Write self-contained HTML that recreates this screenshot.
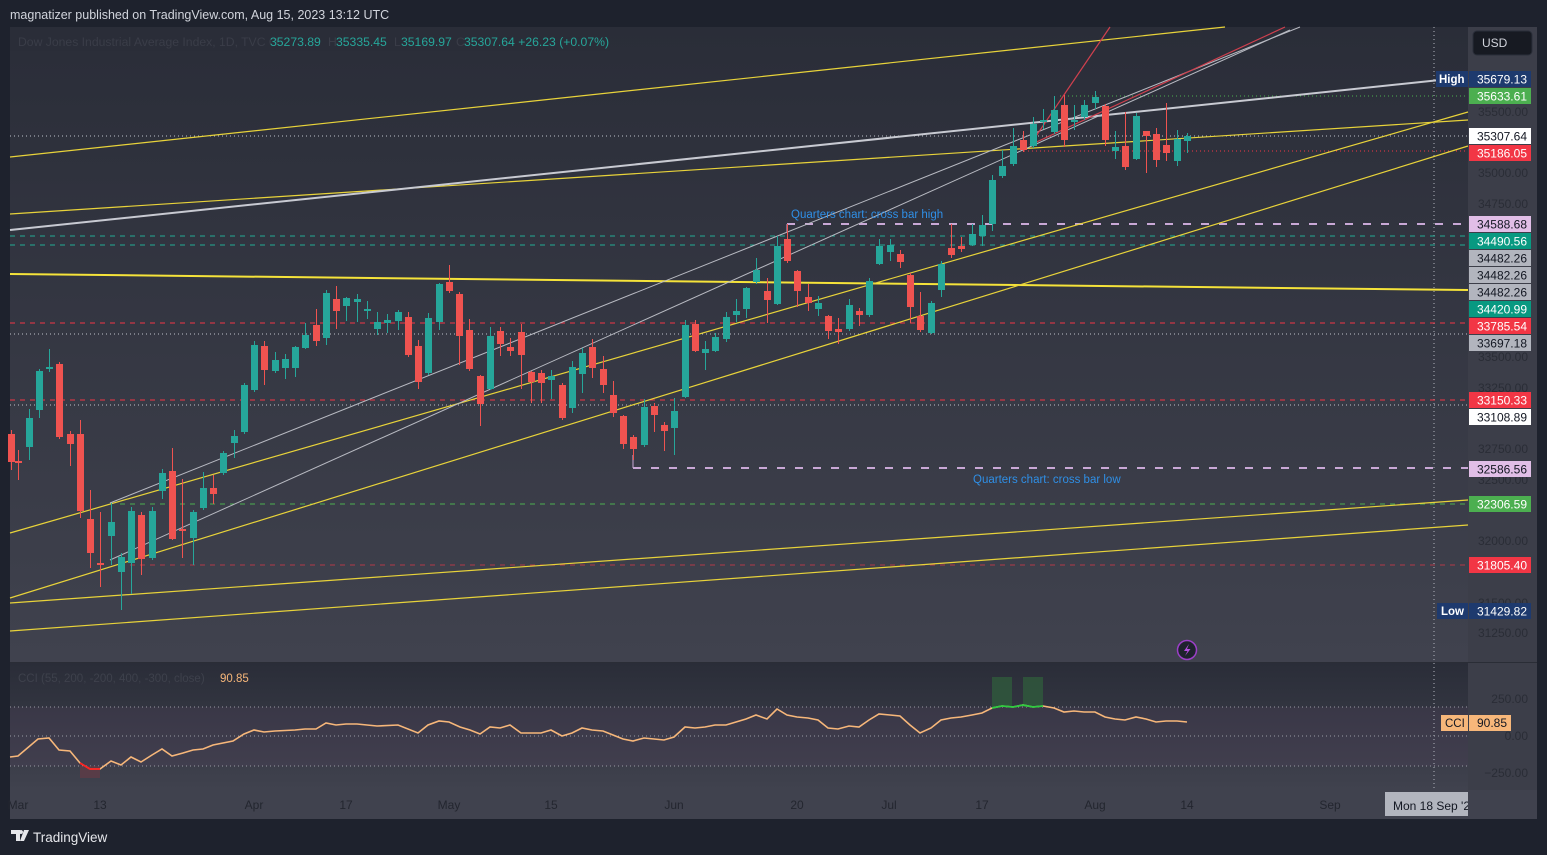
<!DOCTYPE html>
<html><head><meta charset="utf-8"><style>
html,body{margin:0;padding:0;background:#1e222d;width:1547px;height:855px;overflow:hidden;font-family:"Liberation Sans",sans-serif}
svg{display:block}
</style></head><body>
<svg id="s" width="1547" height="855" xmlns="http://www.w3.org/2000/svg" font-family="Liberation Sans, sans-serif">
<defs>
<linearGradient id="gm" x1="0" y1="0" x2="0" y2="1"><stop offset="0" stop-color="#2a2d38"/><stop offset="1" stop-color="#40424e"/></linearGradient>
<linearGradient id="gc" x1="0" y1="0" x2="0" y2="1"><stop offset="0" stop-color="#2a2d38"/><stop offset="1" stop-color="#40424e"/></linearGradient>
<clipPath id="tc"><rect x="1385" y="790" width="83" height="28"/></clipPath>
</defs>
<rect width="1547" height="855" fill="#1e222d"/>
<text x="10" y="19" font-size="12.5" fill="#d1d4dc">magnatizer published on TradingView.com, Aug 15, 2023 13:12 UTC</text>
<rect x="10" y="27" width="1527" height="792" fill="#3a3c47"/>
<rect x="10" y="27" width="1458" height="636" fill="url(#gm)"/>
<rect x="10" y="663" width="1458" height="127" fill="url(#gc)"/>
<rect x="10" y="707" width="1458" height="59" fill="#4a3f55" opacity="0.35"/>
<rect x="10" y="790" width="1527" height="29" fill="#40424e"/>
<rect x="1468" y="27" width="69" height="763" fill="#3c3e49"/>
<line x1="10" y1="662.5" x2="1537" y2="662.5" stroke="#2a2d36" stroke-width="1"/>
<g id="lines"></g>
<g id="cndl"></g>
<g id="cci"></g>
<g id="lbl"></g>
</svg>
<script>
var S=document.getElementById('s');
function ns(t,a,txt){var e=document.createElementNS('http://www.w3.org/2000/svg',t);for(var k in a)e.setAttribute(k,a[k]);if(txt!==undefined)e.textContent=txt;return e;}
function add(g,t,a,txt){document.getElementById(g).appendChild(ns(t,a,txt));}
var L='lines';
function ln(x1,y1,x2,y2,c,w,d){var a={x1:x1,y1:y1,x2:x2,y2:y2,stroke:c,'stroke-width':w||1};if(d)a['stroke-dasharray']=d;add(L,'line',a);}
ln(1434,27,1434,790,'#b2b5be',1,'1 3');
ln(1060,96,1468,96,'#4caf50',1,'1 3');
ln(10,136,1468,136,'#c0c3cc',1,'1 3');
ln(1020,151,1468,151,'#f23645',1,'1 3');
ln(787,224,1468,224,'#c9a8d6',2,'8 10');
ln(10,236,1468,236,'#22ab94',1,'5 5');
ln(10,245,1468,245,'#22ab94',1,'5 5');
ln(10,323,1468,323,'#f23645',1,'5 5');
ln(10,334,1468,334,'#c0c3cc',1,'1 3');
ln(10,400,1468,400,'#f23645',1,'5 5');
ln(10,405,1468,405,'#c0c3cc',1,'1 3');
ln(633,468,1468,468,'#c9a8d6',2,'8 10');
ln(633,468,633,455,'#c9a8d6',1);
ln(787,224,787,232,'#c9a8d6',1);
ln(120,504,1468,504,'#4caf50',1,'5 5');
ln(130,565,1468,565,'#b23a48',1,'5 5');
ln(10,157,1225,27,'#e8d33a',1.2);
ln(10,214,1468,120,'#e8d33a',1.2);
ln(10,230,1440,80,'#c8cad2',2);
ln(1440,80,1468,78,'#c8cad2',2);
ln(10,274,1468,290,'#f5e33a',2);
ln(10,533,1468,112,'#e8d33a',1.2);
ln(10,598,1468,146,'#e8d33a',1.2);
ln(110,503,1300,27,'#b8bac2',1);
ln(110,560,1290,30,'#b8bac2',1);
ln(1030,145,1285,27,'#d0404e',1.2);
ln(1030,145,1110,27,'#d0404e',1.2);
ln(10,603,1468,500,'#e8d33a',1.2);
ln(10,631,1468,525,'#e8d33a',1.2);
ln(10,707,1468,707,'#9a9ca5',1,'1 3');
ln(10,736,1468,736,'#9a9ca5',1,'1 3');
ln(10,766,1468,766,'#9a9ca5',1,'1 3');
add(L,'text',{x:791,y:218,'font-size':11.5,fill:'#2f8fe6'},'Quarters chart: cross bar high');
add(L,'text',{x:973,y:483,'font-size':11.5,fill:'#2f8fe6'},'Quarters chart: cross bar low');
var C=[[11,434,462,430,470],[18,461,462,450,480],[29,447,418,409,460],[39,410,371,369,418],[49,368,367,349,372],[59,364,437,362,439],[70,434,444,431,466],[80,434,511,420,518],[90,519,553,490,568],[100,563,564,512,587],[111,536,522,503,565],[121,572,557,553,610],[131,563,511,507,594],[141,515,559,512,575],[152,558,511,507,560],[162,491,473,469,499],[172,471,539,448,540],[182,529,530,479,558],[193,538,512,510,565],[203,508,488,472,510],[213,488,494,475,504],[223,473,453,451,475],[234,443,436,430,458],[244,432,385,383,434],[254,390,345,341,392],[264,346,370,341,385],[275,371,360,352,373],[285,368,359,354,379],[295,368,347,346,377],[305,348,335,323,349],[316,325,341,309,346],[326,338,293,290,345],[336,299,311,286,329],[346,306,298,297,321],[357,302,299,294,322],[367,311,309,301,319],[377,329,322,312,335],[387,323,320,314,333],[398,321,312,310,330],[408,317,355,312,357],[418,346,382,340,389],[428,373,318,313,375],[439,322,284,283,330],[449,282,291,265,293],[459,294,336,292,365],[469,330,369,319,371],[480,376,404,375,426],[490,389,336,327,390],[500,331,344,327,356],[510,347,351,338,356],[521,332,355,324,389],[531,372,382,371,403],[541,373,383,370,403],[551,380,376,370,399],[562,385,418,383,420],[572,408,367,361,413],[582,374,353,348,393],[592,347,368,339,378],[603,369,385,356,393],[613,395,413,381,417],[623,416,444,415,449],[633,437,449,435,460],[644,445,407,399,447],[654,406,415,403,432],[664,425,431,422,451],[674,428,411,398,455],[685,397,325,320,398],[695,324,351,320,352],[705,353,349,341,370],[715,351,337,333,352],[726,339,317,312,342],[736,315,311,299,322],[746,309,288,287,318],[756,282,270,258,284],[767,291,300,278,323],[777,304,246,236,305],[787,239,261,224,263],[797,271,291,270,307],[808,297,303,284,311],[818,309,303,296,316],[828,316,331,315,339],[838,329,332,318,344],[849,329,305,299,331],[859,311,315,308,326],[869,315,281,278,317],[879,264,246,239,265],[890,252,245,239,261],[900,254,262,250,268],[910,275,307,273,323],[920,316,330,292,332],[931,333,303,301,334],[941,290,264,261,297],[951,248,255,224,258],[961,246,249,237,252],[972,245,234,224,246],[982,236,225,215,246],[992,224,180,175,231],[1002,176,166,150,178],[1013,164,146,128,166],[1023,140,150,131,152],[1033,146,124,117,148],[1043,122,120,109,129],[1054,132,110,96,134],[1064,105,140,95,147],[1074,122,120,105,130],[1084,117,105,100,120],[1095,103,97,91,109],[1105,106,140,104,146],[1115,151,147,131,159],[1125,146,167,112,170],[1136,159,116,113,160],[1146,131,136,131,173],[1156,134,160,128,167],[1166,145,153,103,161],[1177,161,139,130,166],[1187,141,136,133,153]];
C.forEach(function(c){var x=c[0],o=c[1],cl=c[2],h=c[3],l=c[4];var col=cl>o?'#ef5350':'#26a69a';
add('cndl','line',{x1:x+0.5,y1:h,x2:x+0.5,y2:l,stroke:col,'stroke-width':1});
var t=Math.min(o,cl),b=Math.max(o,cl);if(b-t<2)b=t+2;
add('cndl','rect',{x:x-3,y:t,width:7,height:b-t,fill:col});});
var P=[[10,757],[18,756],[38,739],[49,738],[59,750],[70,751],[80,763],[90,769],[100,769],[111,761],[121,765],[131,757],[141,762],[152,755],[162,749],[172,756],[183,753],[193,750],[203,749],[213,745],[233,741],[244,734],[254,730],[264,732],[275,731],[295,730],[305,729],[316,729],[326,723],[336,725],[346,724],[357,724],[377,726],[398,725],[418,733],[428,725],[439,721],[449,722],[460,727],[470,730],[480,734],[490,727],[500,728],[510,725],[521,733],[531,733],[541,733],[551,730],[562,736],[572,733],[582,728],[592,730],[603,731],[613,735],[623,739],[633,741],[644,738],[654,739],[664,740],[674,737],[685,727],[695,728],[705,727],[715,725],[726,725],[736,722],[746,719],[756,715],[767,719],[777,709],[787,715],[797,717],[808,718],[818,720],[828,728],[838,729],[849,726],[859,727],[869,720],[879,714],[890,715],[900,716],[910,725],[920,733],[931,728],[941,720],[951,718],[961,717],[972,715],[982,713],[992,708],[1002,706],[1013,707],[1023,705],[1033,707],[1043,706],[1054,708],[1064,712],[1074,711],[1084,712],[1095,712],[1105,717],[1115,719],[1125,720],[1136,717],[1146,719],[1156,722],[1166,721],[1177,721],[1187,722]];
add('cci','rect',{x:80,y:766,width:20,height:12,fill:'#6b3a44',opacity:0.6});
add('cci','rect',{x:992,y:677,width:20,height:30,fill:'#2f5a3c',opacity:0.8});
add('cci','rect',{x:1023,y:677,width:20,height:30,fill:'#2f5a3c',opacity:0.8});
add('cci','polyline',{points:P.map(function(p){return p.join(',')}).join(' '),fill:'none',stroke:'#f7b77a','stroke-width':1.6});
add('cci','polyline',{points:'80,763 90,769 100,769',fill:'none',stroke:'#ff2020','stroke-width':1.8});
add('cci','polyline',{points:'992,708 1002,706 1013,707 1023,705 1033,707 1043,706',fill:'none',stroke:'#2ecc40','stroke-width':1.8});
var G='lbl';
function tx(x,y,s,c,sz,anc,w){var a={x:x,y:y,'font-size':sz||11,fill:c};if(anc)a['text-anchor']=anc;if(w)a['font-weight']=w;add(G,'text',a,s);}
add(G,'rect',{x:10,y:31,width:600,height:20,fill:'#2a2d38'});
tx(18,46,'Dow Jones Industrial Average Index, 1D, TVC  O','#3a3d48',12.2);
tx(270,46,'35273.89','#26a69a',12.2);tx(328,46,'H','#3a3d48',12.2);tx(336,46,'35335.45','#26a69a',12.2);
tx(394,46,'L','#3a3d48',12.2);tx(401,46,'35169.97','#26a69a',12.2);tx(456,46,'C','#3a3d48',12.2);tx(464,46,'35307.64  +26.23 (+0.07%)','#26a69a',12.2);
tx(18,682,'CCI (55, 200, -200, 400, -300, close)','#3e414c',11.5);tx(220,682,'90.85','#f7b77a',11.5);
add(G,'rect',{x:1473,y:31,width:59,height:24,rx:4,fill:'#171a22',stroke:'#2a2e39'});
tx(1482,47,'USD','#d1d4dc',12);
[[112,'35500.00'],[173,'35000.00'],[204,'34750.00'],[357,'33500.00'],[388,'33250.00'],[449,'32750.00'],[480,'32500.00'],[541,'32000.00'],[603,'31500.00'],[633,'31250.00'],[699,'250.00'],[736,'0.00'],[773,'\u2212250.00']].forEach(function(v){tx(1528,v[0]+4,v[1],'#2a2d36',12,'end');});
function box(y,s,bg,fg){add(G,'rect',{x:1469,y:y-8,width:62,height:16,fill:bg});tx(1527,y+4.5,s,fg,12,'end');}
box(79,'35679.13','#1e3a6e','#ffffff');add(G,'rect',{x:1436,y:71,width:32,height:16,fill:'#1e3a6e'});tx(1439,83,'High','#fff',11.5,null,'bold');
box(96,'35633.61','#4caf50','#ffffff');
box(136,'35307.64','#ffffff','#131722');
box(153,'35186.05','#f23645','#ffffff');
box(224,'34588.68','#e1bee7','#131722');
box(241,'34490.56','#089981','#ffffff');
box(258,'34482.26','#b2b5be','#131722');
box(275,'34482.26','#b2b5be','#131722');
box(292,'34482.26','#b2b5be','#131722');
box(309,'34420.99','#089981','#ffffff');
box(326,'33785.54','#f23645','#ffffff');
box(343,'33697.18','#b2b5be','#131722');
box(400,'33150.33','#f23645','#ffffff');
box(417,'33108.89','#ffffff','#131722');
box(469,'32586.56','#e1bee7','#131722');
box(504,'32306.59','#4caf50','#ffffff');
box(565,'31805.40','#f23645','#ffffff');
box(611,'31429.82','#1e3a6e','#ffffff');add(G,'rect',{x:1437,y:603,width:31,height:16,fill:'#1e3a6e'});tx(1441,615,'Low','#fff',11.5,null,'bold');
add(G,'rect',{x:1441,y:715,width:27,height:16,fill:'#f7b77a'});tx(1445,727,'CCI','#131722',11.5);
add(G,'rect',{x:1469,y:715,width:42,height:16,fill:'#f7b77a'});tx(1507,727,'90.85','#131722',12,'end');
[[18,'Mar'],[100,'13'],[254,'Apr'],[346,'17'],[449,'May'],[551,'15'],[674,'Jun'],[797,'20'],[889,'Jul'],[982,'17'],[1095,'Aug'],[1187,'14'],[1330,'Sep']].forEach(function(v){tx(v[0],809,v[1],'#23262f',12,'middle');});
add(G,'rect',{x:1385,y:792,width:83,height:24,fill:'#b2b5be'});
add(G,'text',{x:1393,y:810,'font-size':12,fill:'#131722','clip-path':'url(#tc)'},"Mon 18 Sep '23");
add(G,'circle',{cx:1187,cy:650,r:9.5,fill:'#1e222d',stroke:'#9c3fc8','stroke-width':1.5});
add(G,'path',{d:'M1189 644 L1184 651 L1187.5 651 L1185 656 L1190.5 649 L1187 649 Z',fill:'#b44fe0'});
add(G,'path',{d:'M11 830 h9 v11 h-4 v-7 h-5 z M21 834 a2 2 0 1 1 0.01 0 z M24 830 h5 l-5 11 h-4 z',fill:'#e6e7eb'});
tx(33,842,'TradingView','#e6e7eb',13.5);
</script>
</body></html>
